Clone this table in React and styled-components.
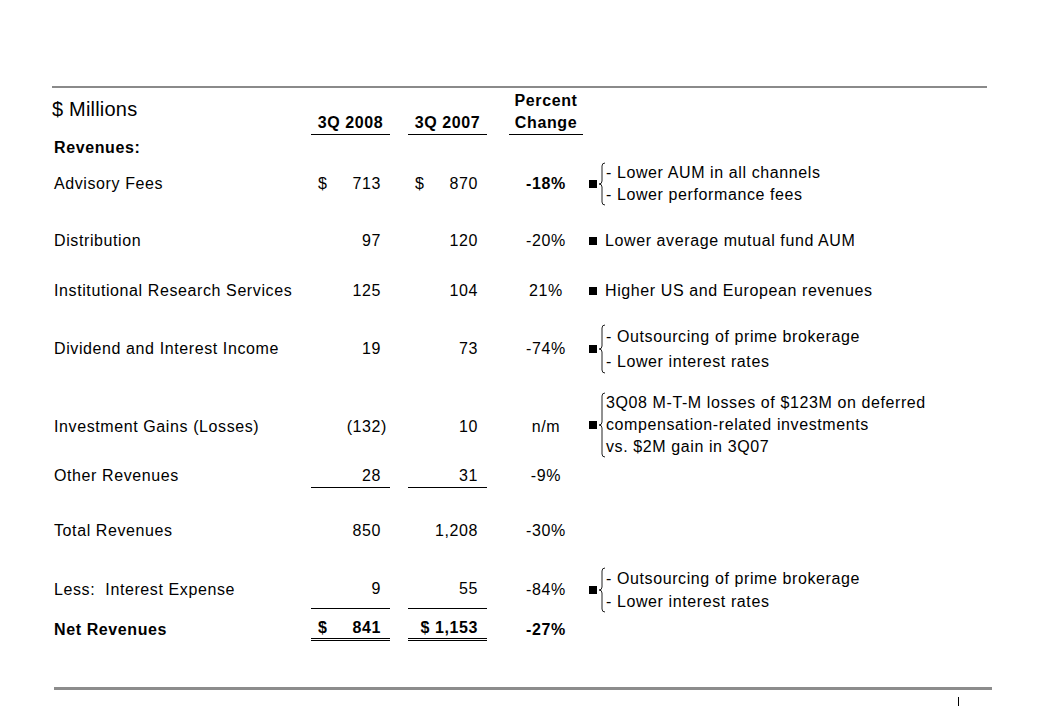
import React from 'react';
import styled, { createGlobalStyle, css } from 'styled-components';

const GlobalStyle = createGlobalStyle`
  html, body {
    margin: 0;
    padding: 0;
    background: #ffffff;
  }
  body {
    font-family: "Liberation Sans", Arial, sans-serif;
    color: #000000;
  }
`;

const Page = styled.div`
  width: 1039px;
  height: 720px;
  padding: 86px 0 0 52px;
  box-sizing: border-box;
  font-size: 16px;
  letter-spacing: 0.6px;
`;

const TopRule = styled.div`
  width: 935px;
  height: 2px;
  background: #8a8a8a;
`;

const BottomRule = styled.div`
  width: 938px;
  height: 3px;
  margin: 37px 0 0 2px;
  background: #8c8c8c;
`;

const PageMark = styled.div`
  width: 1px;
  height: 9px;
  margin: 7px 0 0 906px;
  background: #000;
`;

const Row = styled.div`
  display: grid;
  grid-template-columns: 259px 97px 101px 79px 1fr;
  grid-template-rows: 100%;
  align-items: center;
  height: ${(p) => p.$h}px;
  padding-top: ${(p) => p.$pad || 0}px;
  box-sizing: border-box;
`;

const Label = styled.div`
  padding-left: 2px;
  white-space: pre;
  font-weight: ${(p) => (p.$bold ? 'bold' : 'normal')};
`;

const Millions = styled.div`
  align-self: start;
  margin-top: 10px;
  font-size: 20px;
  line-height: 22px;
  letter-spacing: 0.2px;
`;

const ColHead = styled.div`
  align-self: end;
  width: ${(p) => p.$w}px;
  border-bottom: 1px solid #000;
  text-align: center;
  font-weight: bold;
  line-height: 22px;
`;

const Num = styled.div`
  width: ${(p) => p.$w}px;
  box-sizing: border-box;
  display: flex;
  align-items: center;
  justify-content: ${(p) => (p.$dollar ? 'space-between' : 'flex-end')};
  padding: 0 9px 0 7px;
  line-height: 20px;
  white-space: pre;
  font-weight: ${(p) => (p.$bold ? 'bold' : 'normal')};
  ${(p) =>
    p.$rule &&
    css`
      align-self: stretch;
      border-bottom: 1px solid #000;
    `}
  ${(p) =>
    p.$double &&
    css`
      border-bottom: 3px double #000;
    `}
`;

const Pct = styled.div`
  width: 74px;
  text-align: center;
  line-height: 20px;
  font-weight: ${(p) => (p.$bold ? 'bold' : 'normal')};
`;

const Hang = styled.span`
  margin-right: -6px;
`;

const Note = styled.div`
  display: flex;
  align-items: center;
  padding-left: 1px;
  white-space: nowrap;
  margin-top: ${(p) => p.$shift || 0}px;
`;

const Bullet = styled.span`
  width: 8px;
  height: 8px;
  background: #000;
  flex: none;
  margin-right: ${(p) => (p.$braced ? 1 : 8)}px;
`;

const Lines = styled.div`
  display: flex;
  flex-direction: column;
  line-height: ${(p) => p.$lh || 22}px;
`;

function Brace({ height }) {
  const m = height / 2;
  const d = `M7,1 Q4,1 4,4 L4,${m - 3} Q4,${m} 1,${m} Q4,${m} 4,${m + 3} L4,${height - 4} Q4,${height - 1} 7,${height - 1}`;
  return (
    <svg width="8" height={height} style={{ flex: 'none' }}>
      <path d={d} fill="none" stroke="#222" strokeWidth="1" />
    </svg>
  );
}

function NoteCell({ lines, lh = 22, shift }) {
  if (!lines) return <div />;
  if (lines.length === 1) {
    return (
      <Note>
        <Bullet />
        <span>{lines[0]}</span>
      </Note>
    );
  }
  return (
    <Note $shift={shift}>
      <Bullet $braced />
      <Brace height={lines.length * lh} />
      <Lines $lh={lh}>
        {lines.map((l) => (
          <span key={l}>{l}</span>
        ))}
      </Lines>
    </Note>
  );
}

function Value({ v, w, dollar, bold, rule, double }) {
  const neg = v.startsWith('(');
  return (
    <Num $w={w} $dollar={dollar} $bold={bold} $rule={rule} $double={double}>
      {dollar && <span>$</span>}
      <span>
        {neg ? (
          <>
            {v.slice(0, -1)}
            <Hang>)</Hang>
          </>
        ) : (
          v
        )}
      </span>
    </Num>
  );
}

const prime = ['- Outsourcing of prime brokerage', '- Lower interest rates'];

const rows = [
  { label: 'Revenues:', bold: true, h: 25 },
  {
    label: 'Advisory Fees', a: '713', b: '870', pct: '-18%', pctBold: true, dollar: true, h: 48,
    note: ['- Lower AUM in all channels', '- Lower performance fees'],
  },
  { label: 'Distribution', a: '97', b: '120', pct: '-20%', h: 66, note: ['Lower average mutual fund AUM'] },
  { label: 'Institutional Research Services', a: '125', b: '104', pct: '21%', h: 34, note: ['Higher US and European revenues'] },
  { label: 'Dividend and Interest Income', a: '19', b: '73', pct: '-74%', h: 82, note: prime, lh: 25 },
  {
    label: 'Investment Gains (Losses)', a: '(132)', b: '10', pct: 'n/m', h: 74, shift: -5,
    note: ['3Q08 M-T-M losses of $123M on deferred', 'compensation-related investments', 'vs. $2M gain in 3Q07'],
  },
  { label: 'Other Revenues', a: '28', b: '31', pct: '-9%', h: 24, rule: true },
  { label: 'Total Revenues', a: '850', b: '1,208', pct: '-30%', h: 82, pad: 4 },
  { label: 'Less:  Interest Expense', a: '9', b: '55', pct: '-84%', h: 39, rule: true, note: prime, lh: 23 },
  { label: 'Net Revenues', a: '841', b: '$ 1,153', pct: '-27%', h: 41, bold: true, pctBold: true, dollarA: true, double: true },
];

export default function App() {
  return (
    <Page>
      <GlobalStyle />
      <TopRule />
      <Row $h={47}>
        <Millions>$ Millions</Millions>
        <ColHead $w={79}>3Q 2008</ColHead>
        <ColHead $w={79}>3Q 2007</ColHead>
        <ColHead $w={74}>
          Percent
          <br />
          Change
        </ColHead>
        <div />
      </Row>
      {rows.map((r) => (
        <Row key={r.label} $h={r.h} $pad={r.pad}>
          <Label $bold={r.bold}>{r.label}</Label>
          {r.a ? (
            <>
              <Value v={r.a} w={79} dollar={r.dollar || r.dollarA} bold={r.bold} rule={r.rule} double={r.double} />
              <Value v={r.b} w={79} dollar={r.dollar} bold={r.bold} rule={r.rule} double={r.double} />
              <Pct $bold={r.pctBold}>{r.pct}</Pct>
            </>
          ) : (
            <>
              <div />
              <div />
              <div />
            </>
          )}
          <NoteCell lines={r.note} lh={r.lh} shift={r.shift} />
        </Row>
      ))}
      <BottomRule />
      <PageMark />
    </Page>
  );
}
